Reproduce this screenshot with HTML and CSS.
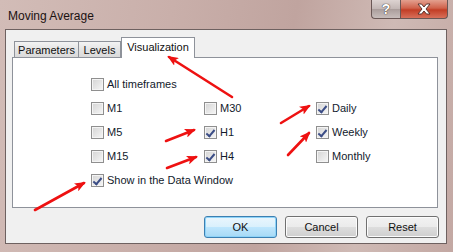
FILE: index.html
```html
<!DOCTYPE html>
<html lang="en">
<head>
    <meta charset="UTF-8">
    <title>Moving Average</title>
    <link rel="stylesheet" href="styles.css">
</head>
<body>
    <div class="window">
        <!-- Barre de titre -->
        <div class="titlebar">
            <span class="title">Moving Average</span>
            <div class="caption-btns">
                <div class="cap-btn help">?</div>
                <div class="cap-btn close">
                    <svg width="18" height="12" viewBox="0 0 18 12">
                        <path d="M3 1 L6.5 1 L9 4 L11.5 1 L15 1 L11 6 L15 11 L11.5 11 L9 8 L6.5 11 L3 11 L7 6 Z" fill="#fff" stroke="#4a2a26" stroke-width="0.9"/>
                    </svg>
                </div>
            </div>
        </div>

        <div class="client">
            <!-- Onglets -->
            <div class="tabs">
                <div class="tab tab-params">Parameters</div>
                <div class="tab tab-levels">Levels</div>
                <div class="tab active">Visualization</div>
            </div>

            <div class="panel">
                <div class="options">
                    <label class="opt wide"><span class="box"></span>All timeframes</label>

                    <label class="opt"><span class="box"></span>M1</label>
                    <label class="opt"><span class="box"></span>M30</label>
                    <label class="opt"><span class="box checked"></span>Daily</label>

                    <label class="opt"><span class="box"></span>M5</label>
                    <label class="opt"><span class="box checked"></span>H1</label>
                    <label class="opt"><span class="box checked"></span>Weekly</label>

                    <label class="opt"><span class="box"></span>M15</label>
                    <label class="opt"><span class="box checked"></span>H4</label>
                    <label class="opt"><span class="box"></span>Monthly</label>

                    <label class="opt wide"><span class="box checked"></span>Show in the Data Window</label>
                </div>
            </div>

            <div class="btn-row">
                <button class="btn btn-default">OK</button>
                <button class="btn">Cancel</button>
                <button class="btn">Reset</button>
            </div>
        </div>

        <!-- Flèches rouges -->
        <svg class="arrows" width="453" height="252" viewBox="0 0 453 252">
            <defs>
                <marker id="head" markerUnits="userSpaceOnUse" markerWidth="11" markerHeight="9" refX="9" refY="4.5" orient="auto">
                    <path d="M0 0 L11 4.5 L0 9 L2.5 4.5 Z" fill="#ee1111"/>
                </marker>
            </defs>
            <g stroke="#ee1111" stroke-width="2.6" stroke-linecap="round" marker-end="url(#head)">
                <line x1="232" y1="97" x2="169" y2="57"/>
                <line x1="281" y1="123" x2="309" y2="106"/>
                <line x1="288" y1="155" x2="309" y2="133"/>
                <line x1="166" y1="141" x2="194" y2="130"/>
                <line x1="167" y1="168" x2="196" y2="157"/>
                <line x1="35" y1="210" x2="84" y2="183"/>
            </g>
        </svg>
    </div>
</body>
</html>
```

FILE: styles.css
```css
body {
    margin: 0;
    padding: 0;
    background: #c6aca7;
    font-family: "Liberation Sans", Arial, sans-serif;
}

.window {
    position: relative;
    width: 453px;
    height: 252px;
    overflow: hidden;
    background: linear-gradient(100deg, #d2bcb7 0%, #c9afaa 35%, #c0a49f 60%, #cfbab5 80%, #c3a8a3 100%);
}

.titlebar {
    height: 29px;
    display: flex;
    justify-content: space-between;
    align-items: flex-start;
}

.title {
    font-size: 12px;
    color: #1b1212;
    margin: 9px 0 0 8px;
}

.caption-btns {
    display: flex;
    margin-right: 5px;
}

.cap-btn {
    height: 19px;
    box-sizing: border-box;
    border: 1px solid #6a5755;
    border-top: none;
    display: flex;
    align-items: center;
    justify-content: center;
}

.help {
    width: 29px;
    border-radius: 0 0 0 4px;
    border-right: none;
    background: linear-gradient(#ddd3d1, #c2b6b4 50%, #aa9d9b 51%, #c8bdbb);
    color: #fff;
    font-weight: bold;
    font-size: 14px;
    text-shadow: 0 0 1px #3a2c2a, 0 0 1px #3a2c2a;
}

.close {
    width: 48px;
    border-radius: 0 0 4px 0;
    background: linear-gradient(#e3a08f, #d0624b 45%, #c23e26 55%, #d8705a);
}

.client {
    margin-left: 5px;
    width: 442px;
    height: 215px;
    box-sizing: border-box;
    border: 1px solid #6e6160;
    background: #f0f0f0;
}

.tabs {
    display: flex;
    align-items: flex-end;
    height: 27px;
    padding-left: 8px;
}

.tab {
    height: 16px;
    box-sizing: border-box;
    border: 1px solid #8e929a;
    border-bottom: none;
    background: linear-gradient(#f3f3f3, #e4e4e4 50%, #dadada);
    font-size: 11px;
    color: #101010;
    display: flex;
    align-items: center;
    justify-content: center;
}

.tab-params {
    width: 65px;
}

.tab-levels {
    width: 42px;
    border-left: none;
}

.tab.active {
    width: 74px;
    height: 21px;
    margin-bottom: -1px;
    background: #fff;
    position: relative;
    padding-bottom: 3px;
}

.panel {
    margin-left: 6px;
    width: 426px;
    height: 151px;
    box-sizing: border-box;
    border: 1px solid #8e929a;
    background: #fff;
    padding: 14px 0 0 78px;
}

.options {
    display: grid;
    grid-template-columns: 113px 112px auto;
    grid-auto-rows: 24px;
}

.opt {
    display: flex;
    align-items: center;
    gap: 3px;
    font-size: 11px;
    color: #121a2c;
}

.opt.wide {
    grid-column: 1 / 4;
}

.box {
    width: 13px;
    height: 13px;
    box-sizing: border-box;
    border: 1px solid #8f8f8f;
    background: linear-gradient(135deg, #d4d4d4, #f6f6f6);
    box-shadow: inset 0 0 0 1px #f4f4f4;
    position: relative;
}

.box.checked::after {
    content: "";
    position: absolute;
    left: 3px;
    top: 1px;
    width: 3px;
    height: 7px;
    border: solid #3b4d86;
    border-width: 0 2px 2px 0;
    transform: rotate(40deg);
}

.btn-row {
    display: flex;
    justify-content: flex-end;
    gap: 8px;
    padding-right: 7px;
    margin-top: 8px;
}

.btn {
    width: 73px;
    height: 22px;
    font-family: "Liberation Sans", Arial, sans-serif;
    font-size: 11px;
    color: #111;
    border: 1px solid #707070;
    border-radius: 3px;
    background: linear-gradient(#f2f2f2, #ebebeb 50%, #dddddd 51%, #cfcfcf);
    box-shadow: inset 0 0 0 1px #fcfcfc;
    padding: 0;
}

.btn-default {
    border-color: #3c7fb1;
    background: linear-gradient(#eaf6fd, #d9f0fc 50%, #bee6fd 51%, #a7d9f5);
    box-shadow: inset 0 0 0 1px #8ed3f8;
}

.arrows {
    position: absolute;
    top: 0;
    left: 0;
    pointer-events: none;
}
```
